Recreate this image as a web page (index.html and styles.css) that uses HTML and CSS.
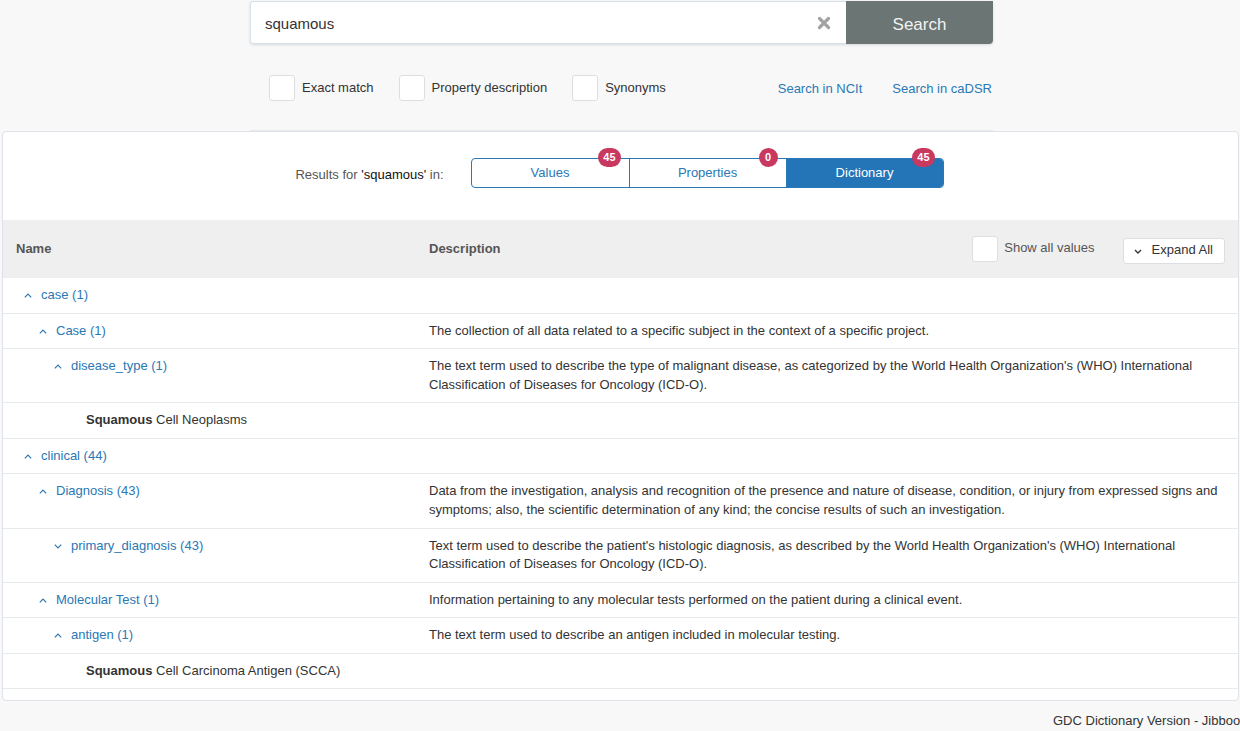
FILE: index.html
```html
<!DOCTYPE html>
<html>
<head>
<meta charset="utf-8">
<title>GDC Dictionary Search</title>
<link rel="stylesheet" href="styles.css">
</head>
<body>
<div class="search-area">
  <div class="search-bar">
    <div class="search-input">
      <span class="query">squamous</span>
      <svg class="clear" width="14" height="14" viewBox="0 0 14 14"><path d="M2.5 2.5 L11.5 11.5 M11.5 2.5 L2.5 11.5" stroke="#a3a3a3" stroke-width="3.2" stroke-linecap="round" fill="none"/></svg>
    </div>
    <div class="search-btn">Search</div>
  </div>
  <div class="options">
    <div class="opt"><span class="cb"></span><span>Exact match</span></div>
    <div class="opt"><span class="cb"></span><span>Property description</span></div>
    <div class="opt"><span class="cb"></span><span>Synonyms</span></div>
    <div class="links">
      <a class="link">Search in NCIt</a>
      <a class="link">Search in caDSR</a>
    </div>
  </div>
</div>

<div class="card">
  <div class="results-bar">
    <span class="results-label">Results for <span class="term">'squamous'</span> in:</span>
    <div class="tabs">
      <div class="tab">Values<span class="badge">45</span></div>
      <div class="tab">Properties<span class="badge">0</span></div>
      <div class="tab active">Dictionary<span class="badge">45</span></div>
    </div>
  </div>

  <div class="table">
    <div class="thead">
      <div class="th">Name</div>
      <div class="th th-desc">
        <span>Description</span>
        <div class="controls">
          <div class="opt"><span class="cb"></span><span class="show-label">Show all values</span></div>
          <div class="expand-btn">
            <svg width="8" height="5" viewBox="0 0 8 5"><polyline points="1,1 4,4 7,1" fill="none" stroke="#333" stroke-width="1.4"/></svg>
            <span>Expand All</span>
          </div>
        </div>
      </div>
    </div>

    <div class="row">
      <div class="name lvl0"><span class="chev"><svg width="8" height="5" viewBox="0 0 8 5"><polyline points="0.8,4.3 4,1.1 7.2,4.3" fill="none" stroke="#2a78b5" stroke-width="1.2"/></svg></span><a class="link">case (1)</a></div>
      <div class="desc"></div>
    </div>
    <div class="row">
      <div class="name lvl1"><span class="chev"><svg width="8" height="5" viewBox="0 0 8 5"><polyline points="0.8,4.3 4,1.1 7.2,4.3" fill="none" stroke="#2a78b5" stroke-width="1.2"/></svg></span><a class="link">Case (1)</a></div>
      <div class="desc">The collection of all data related to a specific subject in the context of a specific project.</div>
    </div>
    <div class="row">
      <div class="name lvl2"><span class="chev"><svg width="8" height="5" viewBox="0 0 8 5"><polyline points="0.8,4.3 4,1.1 7.2,4.3" fill="none" stroke="#2a78b5" stroke-width="1.2"/></svg></span><a class="link">disease_type (1)</a></div>
      <div class="desc">The text term used to describe the type of malignant disease, as categorized by the World Health Organization's (WHO) International Classification of Diseases for Oncology (ICD-O).</div>
    </div>
    <div class="row">
      <div class="name lvl3"><span class="value"><b>Squamous</b> Cell Neoplasms</span></div>
      <div class="desc"></div>
    </div>
    <div class="row">
      <div class="name lvl0"><span class="chev"><svg width="8" height="5" viewBox="0 0 8 5"><polyline points="0.8,4.3 4,1.1 7.2,4.3" fill="none" stroke="#2a78b5" stroke-width="1.2"/></svg></span><a class="link">clinical (44)</a></div>
      <div class="desc"></div>
    </div>
    <div class="row">
      <div class="name lvl1"><span class="chev"><svg width="8" height="5" viewBox="0 0 8 5"><polyline points="0.8,4.3 4,1.1 7.2,4.3" fill="none" stroke="#2a78b5" stroke-width="1.2"/></svg></span><a class="link">Diagnosis (43)</a></div>
      <div class="desc">Data from the investigation, analysis and recognition of the presence and nature of disease, condition, or injury from expressed signs and symptoms; also, the scientific determination of any kind; the concise results of such an investigation.</div>
    </div>
    <div class="row">
      <div class="name lvl2"><span class="chev"><svg width="8" height="5" viewBox="0 0 8 5"><polyline points="0.8,0.7 4,3.9 7.2,0.7" fill="none" stroke="#2a78b5" stroke-width="1.2"/></svg></span><a class="link">primary_diagnosis (43)</a></div>
      <div class="desc">Text term used to describe the patient's histologic diagnosis, as described by the World Health Organization's (WHO) International Classification of Diseases for Oncology (ICD-O).</div>
    </div>
    <div class="row">
      <div class="name lvl1"><span class="chev"><svg width="8" height="5" viewBox="0 0 8 5"><polyline points="0.8,4.3 4,1.1 7.2,4.3" fill="none" stroke="#2a78b5" stroke-width="1.2"/></svg></span><a class="link">Molecular Test (1)</a></div>
      <div class="desc">Information pertaining to any molecular tests performed on the patient during a clinical event.</div>
    </div>
    <div class="row">
      <div class="name lvl2"><span class="chev"><svg width="8" height="5" viewBox="0 0 8 5"><polyline points="0.8,4.3 4,1.1 7.2,4.3" fill="none" stroke="#2a78b5" stroke-width="1.2"/></svg></span><a class="link">antigen (1)</a></div>
      <div class="desc">The text term used to describe an antigen included in molecular testing.</div>
    </div>
    <div class="row">
      <div class="name lvl3"><span class="value"><b>Squamous</b> Cell Carcinoma Antigen (SCCA)</span></div>
      <div class="desc"></div>
    </div>
  </div>
</div>

<div class="footer"><span>GDC Dictionary Version - Jibboom</span></div>
</body>
</html>
```

FILE: styles.css
```css
* { box-sizing: border-box; }

html, body {
  margin: 0;
  padding: 0;
}

body {
  width: 1240px;
  height: 731px;
  overflow: hidden;
  background: #f8f8f8;
  font-family: "Liberation Sans", Arial, Helvetica, sans-serif;
  font-size: 13px;
  line-height: 1.42857;
  color: #333;
}

a.link {
  color: #2a78b5;
  text-decoration: none;
  cursor: pointer;
}

/* ---------- search area ---------- */
.search-area {
  width: 743px;
  margin-left: 250px;
  border-bottom: 1px solid #e6e8ea;
}

.search-bar {
  display: flex;
  height: 43px;
  margin-top: 1px;
  box-shadow: 0 1px 3px rgba(0, 0, 0, 0.12);
  border-radius: 0 4px 4px 4px;
}

.search-input {
  flex: 1;
  display: flex;
  align-items: center;
  justify-content: space-between;
  background: #fff;
  border: 1px solid #d8e2ea;
  border-right: none;
  border-radius: 3px 0 0 3px;
  padding: 3px 15px 0 14px;
}

.query {
  font-size: 15px;
  color: #333;
}

.clear { display: block; margin-top: -2px; }

.search-btn {
  width: 147px;
  display: flex;
  align-items: center;
  justify-content: center;
  padding-top: 5px;
  background: #6b7573;
  color: #f2f2f2;
  font-size: 17px;
  border-radius: 0 0 4px 0;
}

.options {
  display: flex;
  align-items: center;
  margin: 31px 0 29px;
  padding-left: 19px;
  height: 26px;
}

.opt {
  display: flex;
  align-items: center;
  gap: 7px;
  margin-right: 25px;
  color: #333;
}

.cb {
  display: inline-block;
  width: 26px;
  height: 26px;
  background: #fff;
  border: 1px solid #dcdfe2;
  border-radius: 3px;
}

.links {
  margin-left: auto;
  display: flex;
  gap: 30px;
  padding-top: 2px;
  padding-right: 1px;
}

/* ---------- card ---------- */
.card {
  margin: 0 1px 0 2px;
  background: #fff;
  border: 1px solid #dde3e8;
  border-radius: 4px;
  padding: 26px 0 11px;
}

.results-bar {
  display: flex;
  align-items: center;
  justify-content: center;
  gap: 27px;
  margin-bottom: 32px;
  padding-right: 2px;
}

.results-label {
  color: #555;
  padding-top: 4px;
}

.term { color: #111; }

.tabs {
  display: flex;
  border: 1px solid #2a78b5;
  border-radius: 4px;
  height: 30px;
}

.tab {
  position: relative;
  width: 157px;
  display: flex;
  align-items: center;
  justify-content: center;
  color: #2a78b5;
  border-left: 1px solid #2a78b5;
}

.tab:first-child { border-left: none; }

.tab.active {
  background: #2475b7;
  color: #fff;
  border-radius: 0 3px 3px 0;
}

.badge {
  position: absolute;
  top: -11px;
  right: 8px;
  min-width: 19px;
  height: 19px;
  padding: 0 5px;
  border-radius: 10px;
  background: #c8385f;
  color: #fff;
  font-size: 11px;
  font-weight: bold;
  line-height: 19px;
  text-align: center;
}

/* ---------- table ---------- */
.thead {
  display: grid;
  grid-template-columns: 412px 1fr;
  height: 58px;
  background: #efefef;
  align-items: center;
}

.th {
  padding: 0 14px 0 13px;
  font-weight: bold;
  color: #555;
}

.th-desc {
  display: flex;
  align-items: center;
  justify-content: space-between;
  padding-left: 14px;
  padding-right: 13px;
}

.controls {
  display: flex;
  align-items: center;
}

.controls .opt {
  margin-right: 28px;
  gap: 6px;
  font-weight: normal;
  margin-top: -1px;
}

.show-label { color: #555; }

.expand-btn {
  display: flex;
  align-items: center;
  gap: 10px;
  height: 26px;
  padding: 0 11px 0 10px;
  background: #fff;
  border: 1px solid #dcdfe2;
  border-radius: 3px;
  font-weight: normal;
  color: #333;
  margin-top: 3px;
}

.expand-btn svg { display: block; margin-top: 1px; }

.row {
  display: grid;
  grid-template-columns: 412px 1fr;
  border-bottom: 1px solid #e8ebed;
}

.name, .desc {
  padding: 8px 14px;
}

.desc { padding-right: 8px; }

.name {
  display: flex;
  align-items: flex-start;
}

.lvl0 { padding-left: 11px; }
.lvl1 { padding-left: 26px; }
.lvl2 { padding-left: 41px; }
.lvl3 { padding-left: 83px; }

.chev {
  width: 27px;
  height: 18px;
  flex: none;
  display: flex;
  align-items: center;
  padding-left: 10px;
  padding-top: 1px;
}

.chev svg { display: block; }

.value b { font-weight: bold; }

/* ---------- footer ---------- */
.footer {
  margin-top: 11px;
  padding-left: 1053px;
  white-space: nowrap;
  color: #333;
}
```
